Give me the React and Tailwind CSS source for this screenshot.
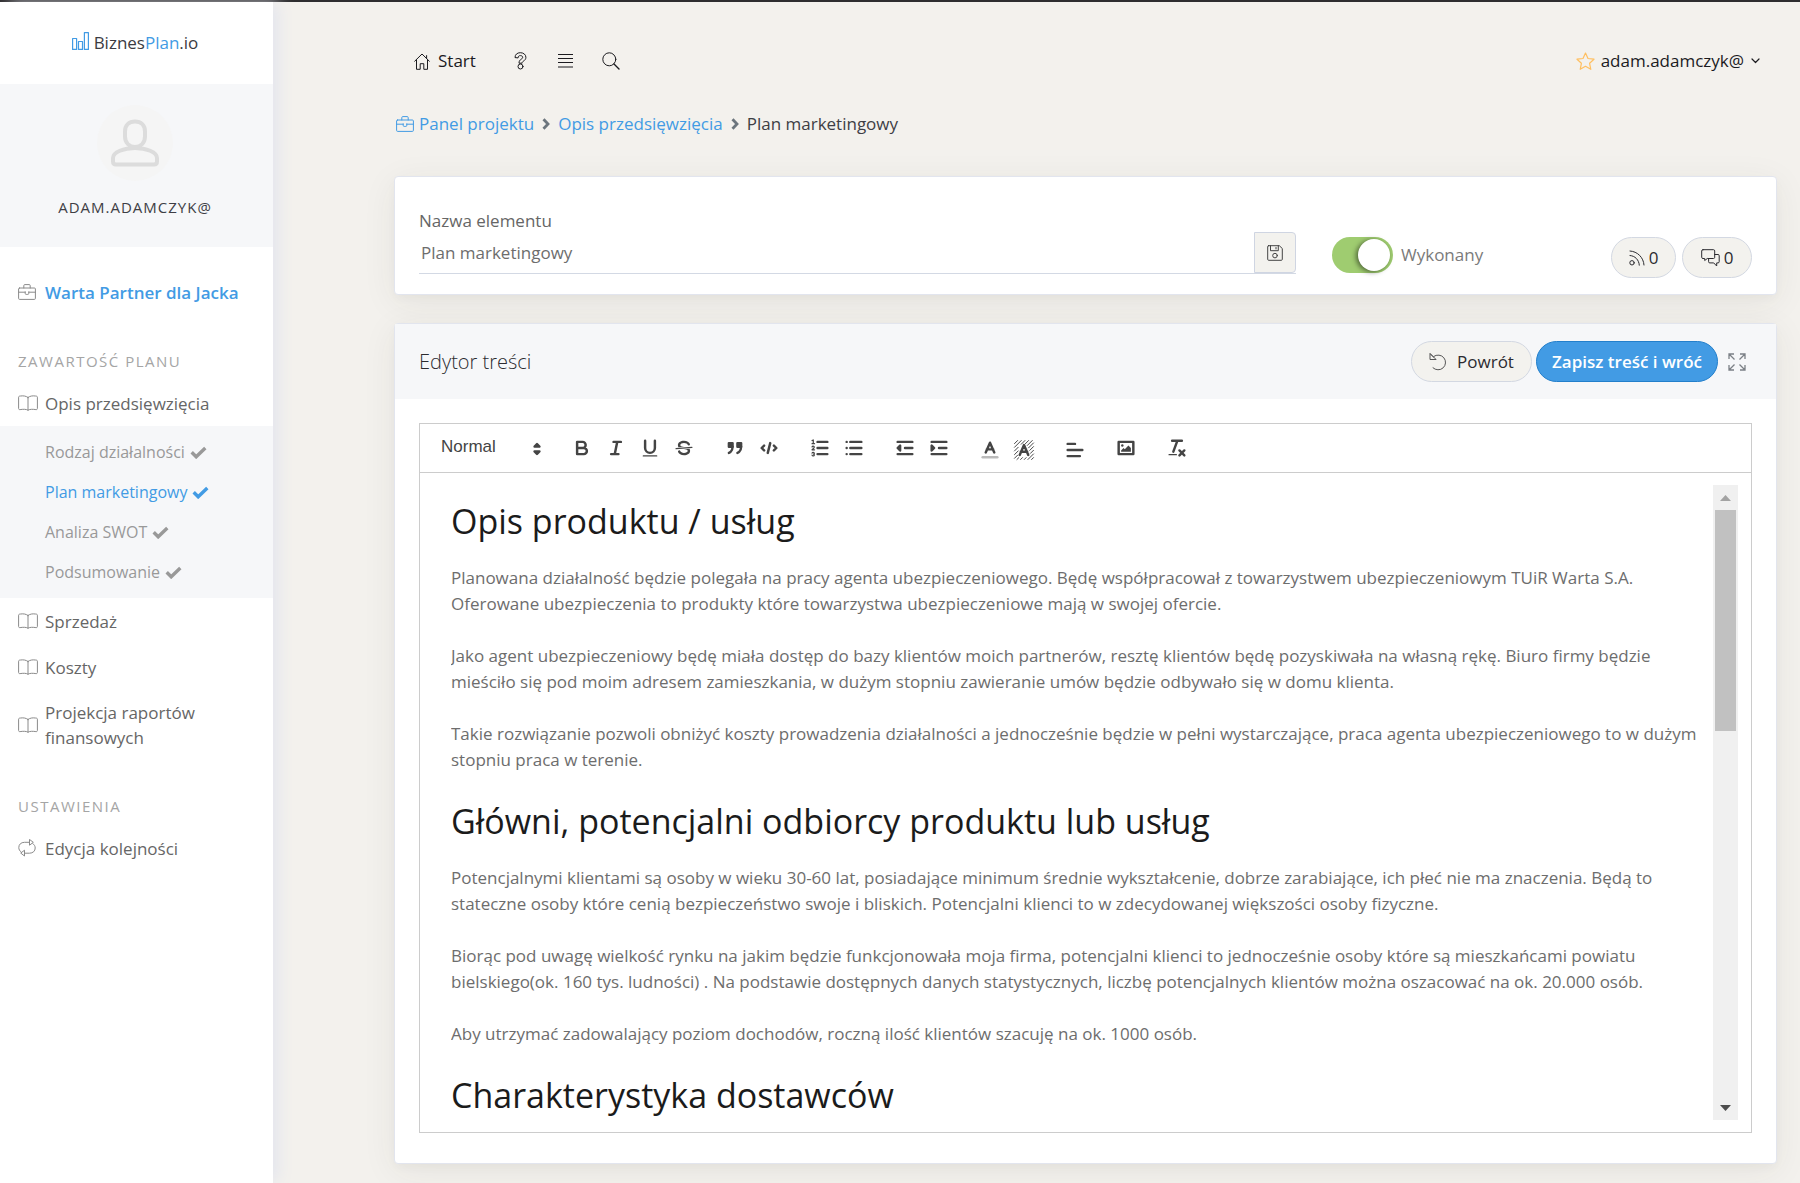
import clsx from "clsx";

function Icon({ w = 20, h = 20, className, children }) {
  return (
    <svg
      width={w}
      height={h}
      viewBox={`0 0 ${w} ${h}`}
      fill="none"
      stroke="currentColor"
      strokeLinecap="round"
      strokeLinejoin="round"
      className={clsx("shrink-0", className)}
      aria-hidden="true"
    >
      {children}
    </svg>
  );
}

const BriefcaseIcon = ({ className }) => (
  <Icon w={18} h={16} className={className}>
    <rect x="0.6" y="4" width="16.8" height="11.4" rx="1" />
    <path d="M5.8 4V1.6q0-1 1-1h4.4q1 0 1 1V4M.6 8.2h6.6M10.8 8.2h6.6M7.2 7.8v1.6q0 1 1 1h1.6q1 0 1-1V7.8" />
  </Icon>
);

const BookIcon = () => (
  <Icon w={20} h={16}>
    <path d="M10 2.4C8 1 5.500.6 2.600 1 1.400 1.100.6 1.300.6 2.200v11.300c0 .9.5 1.200 1.500 1.100C5 14.200 8 14 10 15.200c2-1.200 5-1 7.900-.6 1 .1 1.500-.2 1.500-1.100V2.200c0-.9-.8-1.100-2-1.200C14.500.6 12 1 10 2.400zM10 2.400v12.800" />
  </Icon>
);

const RepeatIcon = () => (
  <Icon w={18} h={18}>
    <path d="M11.500 3.300H6.500C3 3.300.8 5.500.8 8.500c0 2 .9 3.500 2.300 4.500M11.500.8v5.400L15 3.600zM14.800 4.600c1.500 1 2.400 2.500 2.400 4.400 0 3-2.200 5.200-5.700 5.200H6.500M6.500 11.600V17L3 14.300z" />
  </Icon>
);

const CheckIcon = () => (
  <Icon w={17} h={13}>
    <path d="M1.700 6.300l4.500 4.500L15.300 2" strokeWidth="3.400" strokeLinecap="butt" strokeLinejoin="miter" />
  </Icon>
);

const CaretIcon = () => (
  <Icon w={8} h={12} className="text-[#6c757d]">
    <path d="M1.500 1.200L6 6l-4.500 4.800" strokeWidth="2.800" strokeLinecap="butt" strokeLinejoin="miter" />
  </Icon>
);

const sections = ["Sprzedaż", "Koszty", "Projekcja raportów finansowych"];

const planItems = [
  { name: "Rodzaj działalności" },
  { name: "Plan marketingowy", active: true },
  { name: "Analiza SWOT" },
  { name: "Podsumowanie" },
];

function MenuItem({ icon, className, children }) {
  return (
    <a
      href="#"
      className={clsx(
        "flex min-h-[46px] items-center pr-4 pl-[18px] text-[17px] leading-[25px]",
        className || "text-[#666]"
      )}
    >
      <span className="w-[27px] shrink-0 text-[#8a8a8a]">{icon}</span>
      {children}
    </a>
  );
}

function MenuTitle({ children }) {
  return (
    <h2 className="mt-9 mb-[9px] px-[18px] text-[15px] leading-5 tracking-widest text-[#a5a5a5] uppercase">
      {children}
    </h2>
  );
}

function Sidebar() {
  return (
    <aside className="z-10 w-[273px] shrink-0 bg-white shadow-[8px_0_14px_-2px_#e4e6ee]">
      <a href="#" className="flex h-[82px] items-center justify-center gap-[5px] pr-[3px] text-[17px]">
        <Icon w={17} h={18} className="mb-1 text-[#429be4]">
          <path d="M.6 6.500h4v10.900H.6zM6.500 9.500h4v7.900h-4zM12.400.6h4v16.800h-4z" strokeWidth="1.200" />
        </Icon>
        <span className="text-[#3b3b42]">
          Biznes<span className="font-medium text-[#429be4]">Plan</span>.io
        </span>
      </a>

      <div className="flex h-[163px] flex-col items-center bg-[#f6f7f9] pt-[21px] pr-[3px]">
        <div className="flex size-[76px] items-center justify-center rounded-full bg-[#f5f5f5] text-[#dcdcdc]">
          <Icon w={48} h={48}>
            <path
              d="M24 2.500c-6 0-10 4-10 10v5c0 6 4 10.500 10 10.500s10-4.500 10-10.500v-5c0-6-4-10-10-10zM24 29c-11 0-22 4-22 10v3.500q0 3 3 3h38q3 0 3-3V39c0-6-11-10-22-10z"
              strokeWidth="4"
            />
          </Icon>
        </div>
        <span className="mt-4 text-[15px] leading-5 tracking-[1px] text-[#3e3e45]">ADAM.ADAMCZYK@</span>
      </div>

      <nav className="pt-[22px] pb-8">
        <MenuItem icon={<BriefcaseIcon />} className="font-semibold text-[#429be4]">
          Warta Partner dla Jacka
        </MenuItem>

        <MenuTitle>Zawartość planu</MenuTitle>
        <MenuItem icon={<BookIcon />}>Opis przedsięwzięcia</MenuItem>
        <ul className="bg-[#f6f7f9] py-1.5">
          {planItems.map((item) => (
            <li key={item.name}>
              <a
                href="#"
                className={clsx(
                  "flex h-10 items-center gap-[5px] pl-[45px] text-base",
                  item.active ? "font-medium text-[#429be4]" : "text-[#999]"
                )}
              >
                {item.name}
                <CheckIcon />
              </a>
            </li>
          ))}
        </ul>
        {sections.map((name) => (
          <MenuItem key={name} icon={<BookIcon />} className="py-[10px] text-[#666]">
            {name}
          </MenuItem>
        ))}

        <MenuTitle>Ustawienia</MenuTitle>
        <MenuItem icon={<RepeatIcon />}>Edycja kolejności</MenuItem>
      </nav>
    </aside>
  );
}

function TopBar() {
  return (
    <header className="flex h-12 items-center pr-[17px] pl-5 text-[17px] text-[#1b1b1f]">
      <a href="#" className="flex items-center gap-2 font-medium">
        <Icon w={16} h={17}>
          <path d="M.7 8.200L8 1l7.300 7.200M2.500 7v9.300h3.700v-5.600h3.600v5.600h3.700V7M12.600 5.300V2.600" />
        </Icon>
        Start
      </a>
      <button type="button" aria-label="Pomoc" className="ml-[38px]">
        <Icon w={13} h={18}>
          <path d="M1 5.200C1 2.500 3.200.7 6.300.7s5.600 1.800 5.600 4.600c0 2-1.200 3-2.500 3.900-1 .7-1.300 1-1.300 2H5c0-2.200.8-3 2.200-4 .9-.6 1.500-1 1.500-1.900 0-1-.9-1.700-2.300-1.700-1.500 0-2.200.7-2.300 1.900z" />
          <circle cx="6.500" cy="14.500" r="2.500" />
        </Icon>
      </button>
      <button type="button" aria-label="Lista" className="ml-[31px]">
        <Icon w={15} h={16}>
          <path d="M0 1.500h15M0 5.500h15M0 9.500h15M0 14h15" strokeLinecap="butt" />
        </Icon>
      </button>
      <button type="button" aria-label="Szukaj" className="ml-[29px]">
        <Icon w={18} h={18}>
          <circle cx="7.300" cy="7.300" r="6.500" />
          <path d="M12 12l5 5" strokeWidth="1.400" />
        </Icon>
      </button>
      <a href="#" className="ml-auto flex items-center">
        <Icon w={19} h={19} className="mr-[6px] text-[#ffbf60]">
          <path d="M9.500 1l2.500 5.500 6 .700-4.400 4.100 1.200 6-5.300-3-5.300 3 1.200-6L1 7.200l6-.7z" strokeWidth="1.200" />
        </Icon>
        adam.adamczyk@
        <Icon w={9} h={6} className="ml-[7px]">
          <path d="M1 1l3.500 3.500L8 1" strokeWidth="1.200" />
        </Icon>
      </a>
    </header>
  );
}

function Breadcrumbs() {
  return (
    <nav className="mt-[26px] flex h-[26px] items-center gap-2 pl-0.5 text-[17px]">
      <a href="#" className="flex items-center gap-[5px] text-[#429be4]">
        <BriefcaseIcon />
        Panel projektu
      </a>
      <CaretIcon />
      <a href="#" className="text-[#429be4]">
        Opis przedsięwzięcia
      </a>
      <CaretIcon />
      <span className="text-[#3e3e45]">Plan marketingowy</span>
    </nav>
  );
}

const cardClass =
  "rounded border border-[#e2e5ee] bg-white shadow-[0_7px_35px_rgba(60,60,40,0.07),0_4px_8px_rgba(60,60,40,0.03)]";
const pillClass =
  "flex h-[41px] items-center justify-center rounded-full border border-[#d3d8e2] bg-[#f3f2ee] text-[#2b2b30]";

function ElementCard() {
  return (
    <section className={clsx(cardClass, "mt-[39px] flex gap-9 px-6 pt-[31px] pb-4 text-[17px]")}>
      <div className="flex-1">
        <label htmlFor="name" className="block leading-[26px] font-medium text-[#666]">
          Nazwa elementu
        </label>
        <div className="-mt-0.5 flex h-[42px] border-b border-[#d3d9e4]">
          <input
            id="name"
            defaultValue="Plan marketingowy"
            className="min-w-0 flex-1 bg-transparent pl-0.5 text-[#6d6d6d] outline-none"
          />
          <button
            type="button"
            aria-label="Zapisz nazwę"
            className="flex w-[42px] items-center justify-center rounded-r border border-[#cfd5e2] bg-[#f3f2ee] text-[#444]"
          >
            <Icon w={16} h={16}>
              <path d="M1.500.700h10.800l3 2.800v10.800q0 1-1 1H1.700q-1 0-1-1V1.500q0-.8.8-.8zM3.500.700v5h7.800v-5M9 2.500v1.400" />
              <circle cx="8" cy="10.600" r="2.300" />
            </Icon>
          </button>
        </div>
      </div>

      <div className="flex w-[420px] shrink-0 items-start pt-[29px]">
        <label className="flex items-center gap-2 text-[#7a7a7a]">
          <input type="checkbox" defaultChecked className="peer sr-only" />
          <span className="flex h-9 w-[61px] items-center justify-end rounded-full bg-[#9fcc70] pr-[3px]">
            <span className="size-8 rounded-full bg-white shadow-[-2px_1px_5px_rgba(0,0,0,0.5)]"></span>
          </span>
          Wykonany
        </label>
        <div className="ml-auto flex gap-1.5">
          <button type="button" className={clsx(pillClass, "w-[65px] gap-1")}>
            <Icon w={16} h={16}>
              <circle cx="3" cy="12.800" r="2.200" />
              <path d="M1 5.500c5 .3 9 4.300 9.300 9.700M1 1c7.500.4 13.500 6.400 14 14" />
            </Icon>
            0
          </button>
          <button type="button" className={clsx(pillClass, "w-[70px] gap-1")}>
            <Icon w={19} h={18}>
              <path d="M2 .7h10.500q1.200 0 1.200 1.200v6.400q0 1.200-1.200 1.200H6.300l-2.600 2V9.500H2Q.7 9.500.7 8.300V1.900Q.7.700 2 .700zM13.700 5.500H17q1.200 0 1.200 1.200v6q0 1.200-1.200 1.200h-1.300V17l-3-3.100H8.800q-1.200 0-1.200-1.200V9.500" />
            </Icon>
            0
          </button>
        </div>
      </div>
    </section>
  );
}

/* Toolbar glyphs share one 18-unit grid, 22px on screen */
function Tool({ label, className, children }) {
  return (
    <button
      type="button"
      aria-label={label}
      className={clsx("flex h-[29px] w-[34px] items-center justify-center", className)}
    >
      <ToolSvg>{children}</ToolSvg>
    </button>
  );
}

function ToolSvg({ className, children }) {
  return (
    <svg
      viewBox="0 0 18 18"
      className={clsx("size-[22px]", className)}
      fill="none"
      stroke="#444"
      strokeWidth="2"
      strokeLinecap="round"
      strokeLinejoin="round"
      aria-hidden="true"
    >
      {children}
    </svg>
  );
}

const fill = { fill: "#444", stroke: "none" };
const both = { fill: "#444" };

function Toolbar() {
  return (
    <div className="flex h-[50px] items-center gap-[17px] border border-[#ccc] px-3">
      <div className="relative">
        <select
          aria-label="Styl akapitu"
          className="h-[29px] w-[116px] appearance-none bg-transparent pb-0.5 pl-[9px] font-['Liberation_Sans',sans-serif] text-[17px] text-[#444]"
        >
          <option>Normal</option>
        </select>
        <ToolSvg className="pointer-events-none absolute top-1 right-0">
          <path d="M7 11l2 2 2-2zM7 7l2-2 2 2z" fill="#444" />
        </ToolSvg>
      </div>
      <div className="flex">
        <Tool label="Pogrubienie">
          <path d="M5 4h4.500A2.500 2.500 0 0 1 9.500 9H5zM5 9h5.500a2.500 2.500 0 0 1 0 5H5z" />
        </Tool>
        <Tool label="Kursywa">
          <path d="M7 4h6M5 14h6M8 14l2-10" />
        </Tool>
        <Tool label="Podkreślenie">
          <path d="M5 3v6a4 4 0 0 0 4 4 4 4 0 0 0 4-4V3" />
          <rect {...fill} x="3" y="15" width="12" height="1" rx=".5" />
        </Tool>
        <Tool label="Przekreślenie">
          <path d="M15.500 8.500l-13 1" strokeWidth="1" />
          <path
            {...fill}
            d="M9.007 8C6.542 7.791 6 7.519 6 6.500 6 5.792 7.283 5 9 5c1.571 0 2.765.679 2.969 1.309a1 1 0 0 0 1.900-.617C13.356 4.106 11.354 3 9 3 6.200 3 4 4.538 4 6.500a3.200 3.200 0 0 0 .5 1.843zM8.984 10C11.457 10.208 12 10.479 12 11.500c0 .708-1.283 1.500-3 1.500-1.571 0-2.765-.679-2.969-1.309a1 1 0 1 0-1.900.617C4.644 13.894 6.646 15 9 15c2.800 0 5-1.538 5-3.500a3.200 3.200 0 0 0-.5-1.843z"
          />
        </Tool>
      </div>
      <div className="flex">
        <Tool label="Cytat">
          <path {...both} d="M4 5h3v3H4zM11 5h3v3h-3z" />
          <path d="M7 8c0 4.031-3 5-3 5M14 8c0 4.031-3 5-3 5" />
        </Tool>
        <Tool label="Kod">
          <path d="M5 7L3 9l2 2M13 7l2 2-2 2M10 5L8 13" />
        </Tool>
      </div>
      <div className="flex">
        <Tool label="Lista numerowana">
          <path d="M7 4h8M7 9h8M7 14h8" />
          <path
            strokeWidth="1"
            d="M2.500 5.500h2M2.500 2.900l1-.5v3M4.500 10.500h-2c0-.234 1.850-1.076 1.850-2.234A.959.959 0 0 0 2.500 8.156M2.500 14.846a.959.959 0 0 0 1.850-.109A.7.7 0 0 0 3.750 14a.688.688 0 0 0 .6-.736.959.959 0 0 0-1.850-.109"
          />
        </Tool>
        <Tool label="Lista punktowana">
          <path d="M6 4h9M6 9h9M6 14h9M3 4h0M3 9h0M3 14h0" />
        </Tool>
      </div>
      <div className="flex">
        <Tool label="Zmniejsz wcięcie">
          <path d="M3 14h12M3 4h12M9 9h6" />
          <path {...both} d="M5 7v4L3 9z" />
        </Tool>
        <Tool label="Zwiększ wcięcie">
          <path d="M3 14h12M3 4h12M9 9h6" />
          <path {...both} d="M3 7v4l2-2z" />
        </Tool>
      </div>
      <div className="flex pt-1">
        <Tool label="Kolor tekstu">
          <path d="M3 15h12" stroke="#bbb" />
          <path d="M5.500 11L9 3l3.500 8M11.630 8.500H6.380" />
        </Tool>
        <Tool label="Kolor tła">
          <path
            strokeWidth=".8"
            d="M1 4l3-3M1 7l6-6M1 10l3.500-3.500M6.500 4.500l3.500-3.500M1 13l3.500-3.500M9.500 4.500l3.500-3.500M1 16l3-3M11.500 5.500l4.500-4.500M3 17l2-2M12.500 7.500L17 3M6 17l2-2M13.500 9.500L17 6M9 17l2-2M14 12l3-3M12 17l5-5M15 17l2-2"
            strokeLinecap="butt"
          />
          <path d="M5.500 13L9 5l3.500 8M11.630 10.500H6.380" />
        </Tool>
      </div>
      <div className="flex pt-1">
        <Tool label="Wyrównanie">
          <path d="M3 9h12M3 14h10M3 4h6" />
        </Tool>
      </div>
      <Tool label="Obraz">
        <rect x="3" y="4" width="12" height="10" />
        <circle {...fill} cx="6" cy="7" r="1" />
        <path {...fill} d="M5 12v-1l2-2 1 1 3-3 2 2v3z" />
      </Tool>
      <Tool label="Wyczyść formatowanie">
        <path d="M5 3h8M6 12L9.350 3M11 11l4 4M15 11l-4 4" />
        <rect {...fill} x="2" y="14" width="7" height="1" rx=".5" />
      </Tool>
    </div>
  );
}

const content = [
  {
    title: "Opis produktu / usług",
    paragraphs: [
      "Planowana działalność będzie polegała na pracy agenta ubezpieczeniowego. Będę współpracował z towarzystwem ubezpieczeniowym TUiR Warta S.A. Oferowane ubezpieczenia to produkty które towarzystwa ubezpieczeniowe mają w swojej ofercie.",
      "Jako agent ubezpieczeniowy będę miała dostęp do bazy klientów moich partnerów, resztę klientów będę pozyskiwała na własną rękę. Biuro firmy będzie mieściło się pod moim adresem zamieszkania, w dużym stopniu zawieranie umów będzie odbywało się w domu klienta.",
      "Takie rozwiązanie pozwoli obniżyć koszty prowadzenia działalności a jednocześnie będzie w pełni wystarczające, praca agenta ubezpieczeniowego to w dużym stopniu praca w terenie.",
    ],
  },
  {
    title: "Główni, potencjalni odbiorcy produktu lub usług",
    paragraphs: [
      "Potencjalnymi klientami są osoby w wieku 30-60 lat, posiadające minimum średnie wykształcenie, dobrze zarabiające, ich płeć nie ma znaczenia. Będą to stateczne osoby które cenią bezpieczeństwo swoje i bliskich. Potencjalni klienci to w zdecydowanej większości osoby fizyczne.",
      "Biorąc pod uwagę wielkość rynku na jakim będzie funkcjonowała moja firma, potencjalni klienci to jednocześnie osoby które są mieszkańcami powiatu bielskiego(ok. 160 tys. ludności) . Na podstawie dostępnych danych statystycznych, liczbę potencjalnych klientów można oszacować na ok. 20.000 osób.",
      "Aby utrzymać zadowalający poziom dochodów, roczną ilość klientów szacuję na ok. 1000 osób.",
    ],
  },
  { title: "Charakterystyka dostawców", paragraphs: [] },
];

function EditorContent() {
  return (
    <div className="flex h-[660px] border border-t-0 border-[#ccc] py-3 pr-[13px] pl-[31px]">
      <div className="flex-1 overflow-hidden pt-4 pr-[13px]">
        {content.map(({ title, paragraphs }) => (
          <div key={title} className="mb-7">
            <h2 className="mb-6 text-[34px] leading-10 text-[#1b1b1b]">{title}</h2>
            {paragraphs.map((text) => (
              <p key={text} className="mb-[26px] text-[17px] leading-[26px] text-[#6d6d6d]">
                {text}
              </p>
            ))}
          </div>
        ))}
      </div>
      <div className="flex w-[25px] shrink-0 flex-col items-center bg-[#f0f0f0]">
        <div className="flex h-[25px] items-center justify-center">
          <svg width="11" height="6" aria-hidden="true">
            <path d="M0 6L5.500 0 11 6z" fill="#a3a3a3" />
          </svg>
        </div>
        <div className="h-[221px] w-[21px] bg-[#c1c1c1]"></div>
        <div className="mt-auto flex h-[25px] items-center justify-center">
          <svg width="11" height="6" aria-hidden="true">
            <path d="M0 0L5.500 6 11 0z" fill="#4d4d4d" />
          </svg>
        </div>
      </div>
    </div>
  );
}

function EditorCard() {
  return (
    <section className={clsx(cardClass, "mt-7")}>
      <div className="flex h-[75px] items-center bg-[#f6f7f9] px-6 text-[17px]">
        <h1 className="text-xl font-light text-[#2b2b30]">Edytor treści</h1>
        <button type="button" className={clsx(pillClass, "ml-auto w-[121px] gap-[10px] font-medium")}>
          <Icon w={18} h={18} className="text-[#555]">
            <path d="M4.800 3.400A7.400 7.400 0 1 1 4 14.800M1 .8v5.700h5.700zM1.500 1.200L4.500 4" />
          </Icon>
          Powrót
        </button>
        <button
          type="button"
          className="ml-1 h-[41px] w-[182px] rounded-full border border-[#237fcb] bg-[#429be4] font-semibold text-white"
        >
          Zapisz treść i wróć
        </button>
        <button type="button" aria-label="Pełny ekran" className="mr-[6px] ml-[10px] text-[#7b8086]">
          <Icon w={18} h={18}>
            <path
              d="M1 6V1h5M1 1l5.500 5.500M12 1h5v5M17 1l-5.500 5.500M1 12v5h5M1 17l5.500-5.500M17 12v5h-5M17 17l-5.500-5.500"
              strokeWidth="1.300"
              strokeLinecap="butt"
              strokeLinejoin="miter"
            />
          </Icon>
        </button>
      </div>
      <div className="px-6 pt-6 pb-[30px]">
        <Toolbar />
        <EditorContent />
      </div>
    </section>
  );
}

export default function App() {
  return (
    <div className="flex min-h-screen border-t-2 border-[#2e2d2f] bg-[#f3f1ed] font-['Open_Sans',sans-serif]">
      <Sidebar />
      <main className="min-w-0 flex-1 pt-[35px] pr-[23px] pb-[19px] pl-[121px]">
        <TopBar />
        <Breadcrumbs />
        <ElementCard />
        <EditorCard />
      </main>
    </div>
  );
}
